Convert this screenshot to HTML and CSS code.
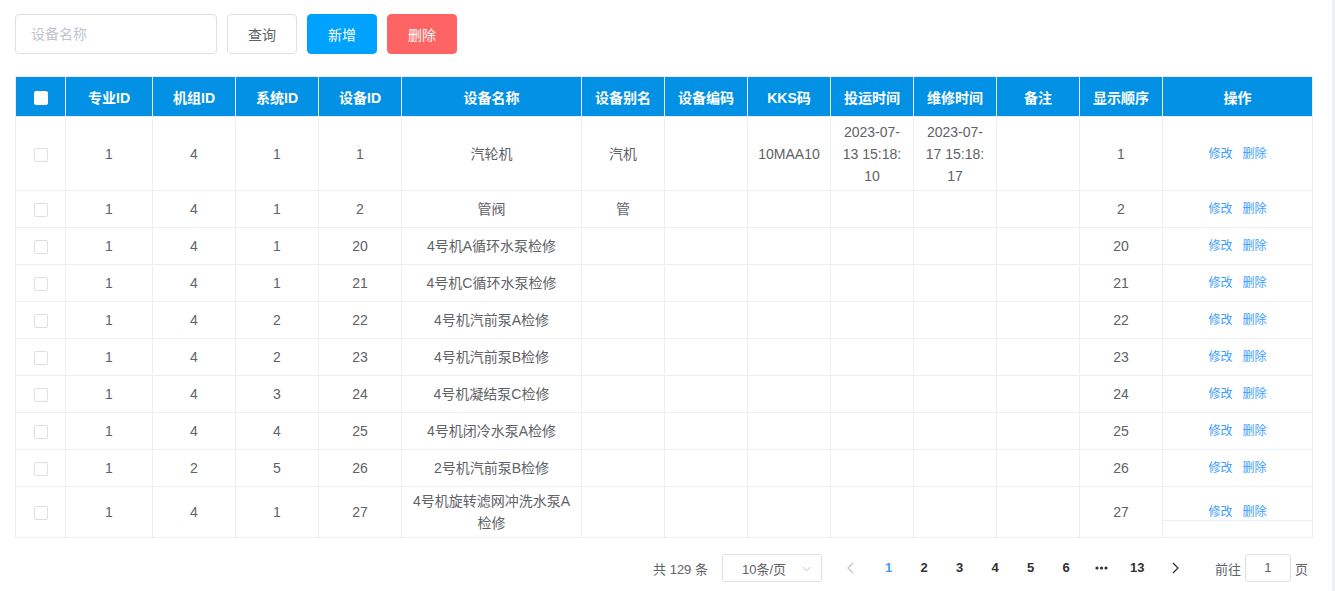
FILE: index.html
```html
<!DOCTYPE html>
<html lang="zh-CN">
<head>
<meta charset="utf-8">
<title>设备管理</title>
<link rel="stylesheet" href="styles.css">
</head>
<body>
<div class="page">
  <div class="toolbar">
    <input class="search" type="text" placeholder="设备名称">
    <button class="btn btn-default">查询</button>
    <button class="btn btn-primary">新增</button>
    <button class="btn btn-danger">删除</button>
  </div>

  <div class="table-wrap">
    <table class="grid">
      <colgroup>
        <col class="c-check"><col class="c-wide"><col class="c-std"><col class="c-std"><col class="c-std">
        <col class="c-name"><col class="c-std"><col class="c-std"><col class="c-std"><col class="c-std">
        <col class="c-std"><col class="c-std"><col class="c-std"><col class="c-ops">
      </colgroup>
      <thead>
        <tr>
          <th><span class="cb cb-head"></span></th>
          <th>专业ID</th><th>机组ID</th><th>系统ID</th><th>设备ID</th><th>设备名称</th>
          <th>设备别名</th><th>设备编码</th><th>KKS码</th><th>投运时间</th><th>维修时间</th>
          <th>备注</th><th>显示顺序</th><th>操作</th>
        </tr>
      </thead>
      <tbody>
        <tr class="r-tall">
          <td><span class="cb"></span></td><td>1</td><td>4</td><td>1</td><td>1</td><td>汽轮机</td>
          <td>汽机</td><td></td><td>10MAA10</td><td>2023-07-<br>13 15:18:<br>10</td><td>2023-07-<br>17 15:18:<br>17</td>
          <td></td><td>1</td><td class="ops"><a class="lnk">修改</a><a class="lnk">删除</a></td>
        </tr>
        <tr>
          <td><span class="cb"></span></td><td>1</td><td>4</td><td>1</td><td>2</td><td>管阀</td>
          <td>管</td><td></td><td></td><td></td><td></td><td></td><td>2</td>
          <td class="ops"><a class="lnk">修改</a><a class="lnk">删除</a></td>
        </tr>
        <tr>
          <td><span class="cb"></span></td><td>1</td><td>4</td><td>1</td><td>20</td><td>4号机A循环水泵检修</td>
          <td></td><td></td><td></td><td></td><td></td><td></td><td>20</td>
          <td class="ops"><a class="lnk">修改</a><a class="lnk">删除</a></td>
        </tr>
        <tr>
          <td><span class="cb"></span></td><td>1</td><td>4</td><td>1</td><td>21</td><td>4号机C循环水泵检修</td>
          <td></td><td></td><td></td><td></td><td></td><td></td><td>21</td>
          <td class="ops"><a class="lnk">修改</a><a class="lnk">删除</a></td>
        </tr>
        <tr>
          <td><span class="cb"></span></td><td>1</td><td>4</td><td>2</td><td>22</td><td>4号机汽前泵A检修</td>
          <td></td><td></td><td></td><td></td><td></td><td></td><td>22</td>
          <td class="ops"><a class="lnk">修改</a><a class="lnk">删除</a></td>
        </tr>
        <tr>
          <td><span class="cb"></span></td><td>1</td><td>4</td><td>2</td><td>23</td><td>4号机汽前泵B检修</td>
          <td></td><td></td><td></td><td></td><td></td><td></td><td>23</td>
          <td class="ops"><a class="lnk">修改</a><a class="lnk">删除</a></td>
        </tr>
        <tr>
          <td><span class="cb"></span></td><td>1</td><td>4</td><td>3</td><td>24</td><td>4号机凝结泵C检修</td>
          <td></td><td></td><td></td><td></td><td></td><td></td><td>24</td>
          <td class="ops"><a class="lnk">修改</a><a class="lnk">删除</a></td>
        </tr>
        <tr>
          <td><span class="cb"></span></td><td>1</td><td>4</td><td>4</td><td>25</td><td>4号机闭冷水泵A检修</td>
          <td></td><td></td><td></td><td></td><td></td><td></td><td>25</td>
          <td class="ops"><a class="lnk">修改</a><a class="lnk">删除</a></td>
        </tr>
        <tr>
          <td><span class="cb"></span></td><td>1</td><td>2</td><td>5</td><td>26</td><td>2号机汽前泵B检修</td>
          <td></td><td></td><td></td><td></td><td></td><td></td><td>26</td>
          <td class="ops"><a class="lnk">修改</a><a class="lnk">删除</a></td>
        </tr>
        <tr class="r-mid">
          <td><span class="cb"></span></td><td>1</td><td>4</td><td>1</td><td>27</td><td>4号机旋转滤网冲洗水泵A<br>检修</td>
          <td></td><td></td><td></td><td></td><td></td><td></td><td>27</td>
          <td class="ops ops-last"><a class="lnk">修改</a><a class="lnk">删除</a></td>
        </tr>
      </tbody>
    </table>
  </div>

  <div class="pager">
    <span class="total">共 129 条</span>
    <span class="sizes">
      <span class="sizes-text">10条/页</span>
      <svg class="sizes-arrow" width="9" height="6" viewBox="0 0 9 6"><polyline points="0.8,1 4.5,4.8 8.2,1" fill="none" stroke="#c0c4cc" stroke-width="1"/></svg>
    </span>
    <span class="nav prev">
      <svg width="7" height="12" viewBox="0 0 7 12"><polyline points="6,1 1,6 6,11" fill="none" stroke="#c0c4cc" stroke-width="1.3"/></svg>
    </span>
    <ul class="pages">
      <li class="active">1</li>
      <li>2</li>
      <li>3</li>
      <li>4</li>
      <li>5</li>
      <li>6</li>
      <li class="more"><svg width="13" height="4" viewBox="0 0 13 4"><circle cx="2" cy="2" r="1.6" fill="#303133"/><circle cx="6.5" cy="2" r="1.6" fill="#303133"/><circle cx="11" cy="2" r="1.6" fill="#303133"/></svg></li>
      <li>13</li>
    </ul>
    <span class="nav next">
      <svg width="7" height="12" viewBox="0 0 7 12"><polyline points="1,1 6,6 1,11" fill="none" stroke="#303133" stroke-width="1.3"/></svg>
    </span>
    <span class="jump">前往<span class="jump-input">1</span>页</span>
  </div>
</div>
</body>
</html>
```

FILE: styles.css
```css
html, body {
  margin: 0;
  padding: 0;
  background: #fff;
}

body {
  font-family: "Liberation Sans", "Noto Sans CJK SC", Arial, sans-serif;
  color: #606266;
}

.page {
  width: 1335px;
  height: 591px;
  box-sizing: border-box;
  padding: 14px 0 0 15px;
  border-right: 3px solid #eef0f4;
  overflow: hidden;
}

/* toolbar */
.toolbar {
  display: flex;
  gap: 10px;
  height: 40px;
}

.search {
  width: 202px;
  height: 40px;
  box-sizing: border-box;
  border: 1px solid #dcdfe6;
  border-radius: 4px;
  padding: 0 15px;
  font-size: 14px;
  font-family: inherit;
  color: #606266;
  outline: none;
}

.search::placeholder {
  color: #c0c4cc;
}

.btn {
  width: 70px;
  height: 40px;
  box-sizing: border-box;
  padding: 0;
  border-radius: 4px;
  border: 1px solid #dcdfe6;
  background: #fff;
  color: #606266;
  font-size: 14px;
  font-family: inherit;
}

.btn-primary {
  background: #00a2ff;
  border-color: #00a2ff;
  color: #fff;
}

.btn-danger {
  background: #fe6464;
  border-color: #fe6464;
  color: #fff;
}

/* table */
.table-wrap {
  margin-top: 22px;
  width: 1297px;
}

.grid {
  width: 1297px;
  table-layout: fixed;
  border-collapse: collapse;
  border: 1px solid #ebeef5;
  font-size: 14px;
  color: #606266;
}

.c-check { width: 50px; }
.c-wide { width: 87px; }
.c-std { width: 83px; }
.c-name { width: 180px; }
.c-ops { width: 150px; }

.grid th {
  height: 39px;
  padding: 0;
  background: #0391e5;
  color: #fff;
  font-weight: 700;
  text-align: center;
  border: 1px solid #e8edf5;
}

.grid td {
  height: 36px;
  padding: 0 4px;
  text-align: center;
  line-height: 22px;
  border: 1px solid #ebeef5;
}

.grid .r-tall td {
  height: 73px;
}

.grid .r-mid td {
  height: 50px;
}

.cb {
  display: inline-block;
  width: 14px;
  height: 14px;
  box-sizing: border-box;
  border: 1px solid #dcdfe6;
  border-radius: 2px;
  background: #fff;
  vertical-align: middle;
}

.cb-head {
  border-color: #fff;
}

.ops {
  font-size: 12px;
}

.lnk {
  color: #409eff;
  margin: 0 5px;
  cursor: pointer;
}

.ops-last {
  position: relative;
}

.ops-last::after {
  content: "";
  position: absolute;
  left: 0;
  right: 0;
  top: 33px;
  height: 1px;
  background: #ebeef5;
}

/* pagination */
.pager {
  width: 1297px;
  box-sizing: border-box;
  margin-top: 16px;
  padding-right: 4px;
  height: 28px;
  display: flex;
  justify-content: flex-end;
  align-items: center;
  font-size: 13px;
  color: #606266;
}

.total {
  margin-right: 14px;
  white-space: nowrap;
}

.sizes {
  position: relative;
  width: 100px;
  height: 28px;
  box-sizing: border-box;
  border: 1px solid #dcdfe6;
  border-radius: 3px;
  display: flex;
  align-items: center;
  margin-right: 13px;
}

.sizes-text {
  width: 82px;
  text-align: center;
  color: #606266;
}

.sizes-arrow {
  position: absolute;
  right: 10px;
  top: 11px;
}

.nav {
  height: 28px;
  display: flex;
  align-items: center;
  justify-content: center;
  box-sizing: border-box;
}

.prev {
  width: 36px;
  padding-right: 4px;
}

.next {
  width: 42px;
}

.pages {
  list-style: none;
  margin: 0;
  padding: 0;
  display: flex;
}

.pages li {
  min-width: 35.5px;
  height: 28px;
  line-height: 28px;
  text-align: center;
  font-weight: 700;
  color: #303133;
}

.pages li.active {
  color: #409eff;
}

.pages li.more {
  display: flex;
  align-items: center;
  justify-content: center;
}

.jump {
  margin-left: 18px;
  display: flex;
  align-items: center;
  white-space: nowrap;
}

.jump-input {
  width: 46px;
  height: 28px;
  box-sizing: border-box;
  margin: 0 4px;
  border: 1px solid #dcdfe6;
  border-radius: 3px;
  text-align: center;
  line-height: 26px;
  color: #606266;
}
```
